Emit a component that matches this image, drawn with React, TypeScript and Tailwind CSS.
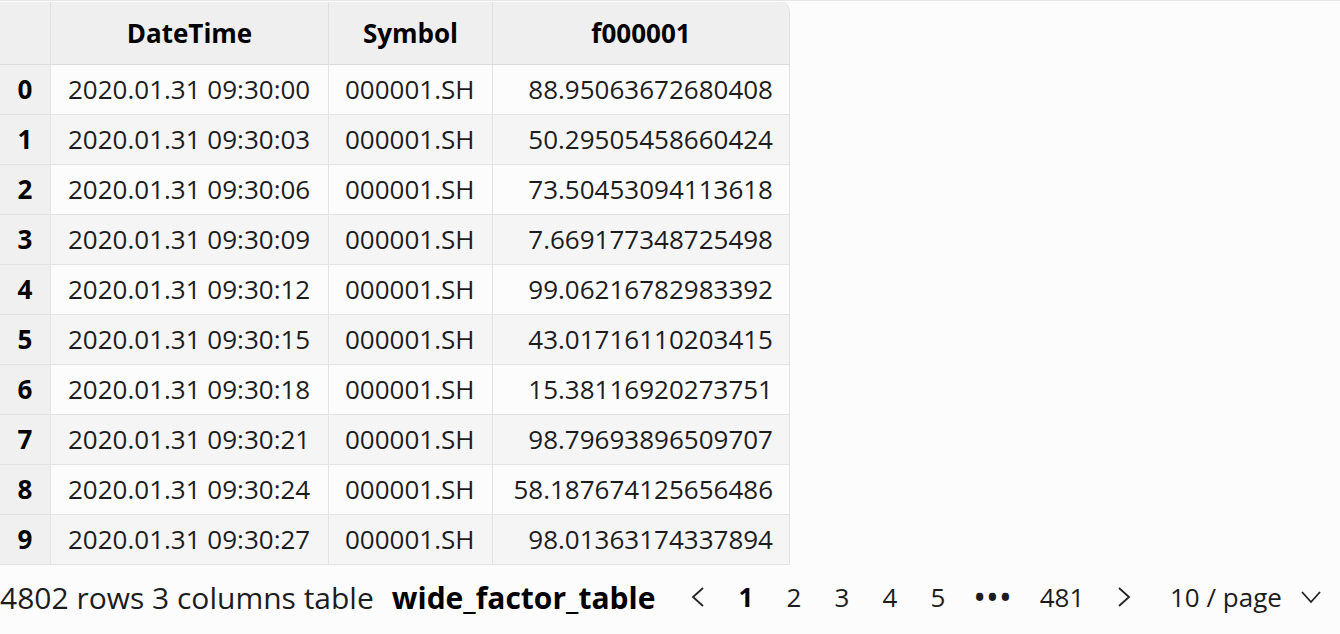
import { memo } from 'react'

interface Row {
  time: string
  symbol: string
  value: string
}

const rows: Row[] = [
  { time: '2020.01.31 09:30:00', symbol: '000001.SH', value: '88.95063672680408' },
  { time: '2020.01.31 09:30:03', symbol: '000001.SH', value: '50.29505458660424' },
  { time: '2020.01.31 09:30:06', symbol: '000001.SH', value: '73.50453094113618' },
  { time: '2020.01.31 09:30:09', symbol: '000001.SH', value: '7.669177348725498' },
  { time: '2020.01.31 09:30:12', symbol: '000001.SH', value: '99.06216782983392' },
  { time: '2020.01.31 09:30:15', symbol: '000001.SH', value: '43.01716110203415' },
  { time: '2020.01.31 09:30:18', symbol: '000001.SH', value: '15.38116920273751' },
  { time: '2020.01.31 09:30:21', symbol: '000001.SH', value: '98.79693896509707' },
  { time: '2020.01.31 09:30:24', symbol: '000001.SH', value: '58.187674125656486' },
  { time: '2020.01.31 09:30:27', symbol: '000001.SH', value: '98.01363174337894' },
]

const pages = ['1', '2', '3', '4', '5']

/** 翻页箭头 */
const Arrow = ({ dir }: { dir: 'left' | 'right' | 'down' }) => {
  if (dir === 'down') {
    return (
      <svg width="22" height="14" viewBox="0 0 22 14" fill="none" stroke="#222" strokeWidth="1.8">
        <polyline points="2,2 11,12 20,2" />
      </svg>
    )
  }
  return (
    <svg width="14" height="22" viewBox="0 0 14 22" fill="none" stroke="#222" strokeWidth="1.8">
      {dir === 'left' ? <polyline points="12,2 2,11 12,20" /> : <polyline points="2,2 12,11 2,20" />}
    </svg>
  )
}

const TableRow = memo(({ row, index }: { row: Row; index: number }) => {
  const stripe = index % 2 === 1 ? 'bg-[#f5f5f6]' : 'bg-[#fcfcfd]'
  return (
    <div className={`flex h-[50px] border-b border-[#e3e3e5] ${stripe}`}>
      <div className="flex w-[51px] items-center justify-center border-r border-[#e3e3e5] bg-[#f0f0f1] font-bold text-black">
        {index}
      </div>
      <div className="flex w-[278px] items-center border-r border-[#e3e3e5] pl-[17px]">{row.time}</div>
      <div className="flex w-[164px] items-center border-r border-[#e3e3e5] pl-[16px]">{row.symbol}</div>
      <div className="flex w-[297px] items-center justify-end border-r border-[#e3e3e5] pr-[16px]">{row.value}</div>
    </div>
  )
})

TableRow.displayName = 'TableRow'

export default function App() {
  return (
    <div
      className="h-[634px] w-[1340px] overflow-hidden border-t border-[#e6e6e8] bg-[#fcfcfd] text-[26px] text-[#1c1c1e]"
      style={{ fontFamily: '"Open Sans", "Noto Sans", sans-serif' }}
    >
      {/* 表格 */}
      <div className="w-[790px] overflow-hidden rounded-tr-[10px] pt-px">
        <div className="flex h-[63px] border-b border-[#dcdcde] bg-[#efeff0] font-bold text-black">
          <div className="w-[51px] border-r border-[#e0e0e2]" />
          <div className="flex w-[278px] items-center justify-center border-r border-[#e0e0e2]">DateTime</div>
          <div className="flex w-[164px] items-center justify-center border-r border-[#e0e0e2]">Symbol</div>
          <div className="flex w-[297px] items-center justify-center rounded-tr-[10px] border-r border-[#e0e0e2]">f000001</div>
        </div>
        {rows.map((row, i) => (
          <TableRow key={i} row={row} index={i} />
        ))}
      </div>

      {/* 底部信息与分页 */}
      <div className="flex h-[64px] items-center">
        <div className="flex w-[674px] items-center whitespace-nowrap text-[30px]">
          <span>4802 rows 3 columns table</span>
          <span className="ml-[18px] font-bold text-black">wide_factor_table</span>
        </div>
        <div className="flex w-[48px] justify-center">
          <Arrow dir="left" />
        </div>
        {pages.map(p => (
          <div key={p} className={`w-[48px] text-center ${p === '1' ? 'font-bold text-black' : ''}`}>
            {p}
          </div>
        ))}
        <div className="w-[64px] text-center font-bold tracking-[3px]">•••</div>
        <div className="w-[72px] text-center">481</div>
        <div className="flex w-[52px] justify-center">
          <Arrow dir="right" />
        </div>
        <div className="ml-[20px] flex items-center gap-[18px]">
          <span>10 / page</span>
          <Arrow dir="down" />
        </div>
      </div>
    </div>
  )
}
